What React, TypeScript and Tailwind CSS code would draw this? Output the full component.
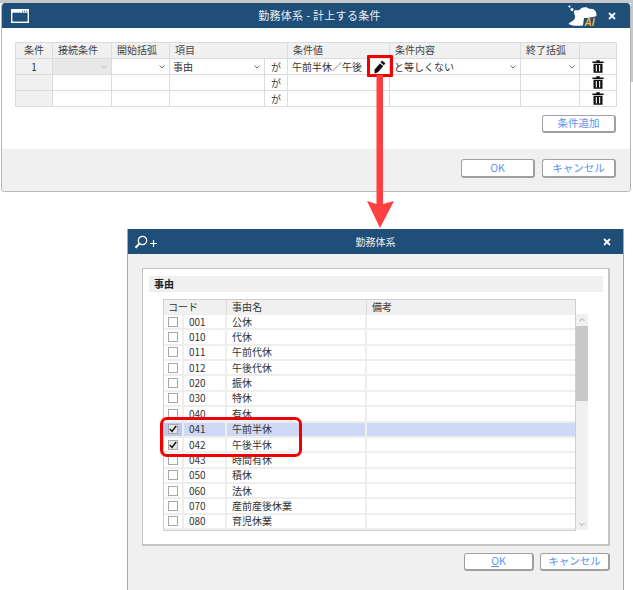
const font = { fontFamily: '"Noto Sans CJK JP", "Noto Sans", sans-serif' };

const topCols = "grid-cols-[37px_59px_58px_95px_23px_80px_22px_131px_59px_37px]";
const topHeaders = ["条件", "接続条件", "開始括弧", "項目", "", "条件値", "", "条件内容", "終了括弧", ""];

const reasons = [
  ["001", "公休"],
  ["010", "代休"],
  ["011", "午前代休"],
  ["012", "午後代休"],
  ["020", "振休"],
  ["030", "特休"],
  ["040", "有休"],
  ["041", "午前半休"],
  ["042", "午後半休"],
  ["043", "時間有休"],
  ["050", "積休"],
  ["060", "法休"],
  ["070", "産前産後休業"],
  ["080", "育児休業"],
];

function Chevron({ light }: { light?: boolean }) {
  return (
    <svg width="6" height="4" viewBox="0 0 6 4" className="absolute right-[4px] top-[6px]">
      <path d="M0.5 0.5 L3 3 L5.5 0.5" fill="none" stroke={light ? "#c0c0c0" : "#777"} strokeWidth="1" />
    </svg>
  );
}

function Trash() {
  return (
    <svg width="12" height="13" viewBox="0 0 12 13">
      <path d="M4.2 1.4V0.2h3.6v1.2h3.8v1.5H0.4V1.4z" fill="#111" />
      <path d="M1.5 3.8h9v9h-9zM3.8 5v6.6h1.1V5zM7.1 5v6.6h1.1V5z" fill="#111" fillRule="evenodd" />
    </svg>
  );
}

function Pencil() {
  return (
    <svg width="13" height="14" viewBox="0 0 13 14" className="translate-x-[1px]">
      <path d="M9 0.6 L12.4 3.2 L10.9 5.2 L7.5 2.6z" fill="#111" />
      <path d="M6.9 3.4 L10.3 6 L5 12.2 L1.6 13.4 L1.4 9.8z" fill="#111" />
    </svg>
  );
}

function Cloud() {
  return (
    <svg width="30" height="21" viewBox="0 0 30 21" className="shrink-0">
      <circle cx="1.5" cy="1.5" r="1.1" fill="#fff" />
      <circle cx="4" cy="4.5" r="1.5" fill="#fff" />
      <path d="M6 6 C8 4.5 10 6 12 4.5 C14 1.5 19 1.5 21.5 4 C25.5 3 29 6 28.5 11 C26 12 22 12.5 19.5 13 L16 13 L15 20.5 C10 21 4 21 0.5 19 C3 16 6.5 16 7 12.5 C7.5 10 5.5 9 6 6z" fill="#fff" />
      <text x="16.5" y="20.5" fontSize="10" fontWeight="700" fontStyle="italic" fill="#f2b632" fontFamily="Liberation Sans, sans-serif">AI</text>
    </svg>
  );
}

function CloseX() {
  return (
    <svg width="8" height="8" viewBox="0 0 8 8" className="shrink-0">
      <path d="M1 1 L7 7 M7 1 L1 7" stroke="#fff" strokeWidth="1.8" />
    </svg>
  );
}

function ZoomPlus() {
  return (
    <svg width="24" height="14" viewBox="0 0 24 14" className="shrink-0">
      <circle cx="8.5" cy="5.5" r="4.2" fill="none" stroke="#fff" strokeWidth="1.2" />
      <path d="M5.2 8.8 L1.5 12.8" stroke="#fff" strokeWidth="2" />
      <path d="M16 8.5 H23 M19.5 5 V12" stroke="#fff" strokeWidth="1.2" />
    </svg>
  );
}

function Btn({ children, className = "" }: { children: React.ReactNode; className?: string }) {
  return (
    <button className={`flex items-center justify-center rounded-[3px] border border-[#a0a0a0] border-b-2 border-r-2 bg-white text-[10.5px] leading-none text-[#5b94ee] ${className}`}>
      {children}
    </button>
  );
}

function TopRow({ index, first }: { index: string; first?: boolean }) {
  const cell = "relative h-[16px] border-r border-b border-[#dcdcdc] text-[10px] leading-[15px] text-[#333]";
  return (
    <div className={`grid ${topCols}`}>
      <div className={`${cell} bg-[#f0f0f0] text-center`}>{index}</div>
      <div className={`${cell} ${first ? "bg-[#e8e8e8]" : ""}`}>{first && <Chevron light />}</div>
      <div className={cell}>{first && <Chevron />}</div>
      <div className={`${cell} pl-[3px]`}>
        {first && "事由"}
        {first && <Chevron />}
      </div>
      <div className={`${cell} text-center text-[#444]`}>が</div>
      <div className={`${cell} overflow-hidden whitespace-nowrap pl-[4px] border-r-0`}>{first && "午前半休／午後"}</div>
      <div className={`${cell} flex items-center justify-center`}>{first && <Pencil />}</div>
      <div className={`${cell} pl-[4px]`}>
        {first && "と等しくない"}
        {first && <Chevron />}
      </div>
      <div className={cell}>{first && <Chevron />}</div>
      <div className={`${cell} flex items-center justify-center`}>
        <Trash />
      </div>
    </div>
  );
}

function ReasonRow({ code, name, on, active }: { code: string; name: string; on: boolean; active: boolean }) {
  const cell = "flex items-center border-r-2 border-[#eeeeee]";
  return (
    <div className={`grid min-h-0 flex-1 grid-cols-[20px_43px_140px_1fr] border-b-2 border-[#eeeeee] text-[10px] leading-none text-[#333] ${active ? "bg-[#cfd9f5]" : ""}`}>
      <div className={`${cell} justify-center ${active ? "bg-[#b9c9f0]" : ""}`}>
        <span className={`flex h-[10px] w-[10px] items-center justify-center border border-[#a8a8a8] ${on ? "bg-[#e6e6e6]" : "bg-white"}`}>
          {on && (
            <svg width="8" height="8" viewBox="0 0 8 8">
              <path d="M0.8 4 L3 6.4 L7.2 1" fill="none" stroke="#111" strokeWidth="1.4" />
            </svg>
          )}
        </span>
      </div>
      <div className={`${cell} pl-[5px]`}>{code}</div>
      <div className={`${cell} pl-[5px]`}>{name}</div>
      <div />
    </div>
  );
}

export default function App() {
  return (
    <div style={font} className="relative h-[590px] w-[633px] overflow-hidden bg-white">
      {/* edge of the window behind the dialog */}
      <div className="h-[3px] bg-[#c8c8c8]" />
      <div className="absolute right-0 top-0 h-[82px] w-[2px] bg-[#c8c8c8]" />

      {/* condition dialog */}
      <div className="ml-[1px] w-[630px]">
        <div className="overflow-hidden rounded-[4px] border border-t-0 border-[#b8b8b8]">
          <div className="flex h-[25px] items-center bg-[#1f4e79] pl-[9px] pr-[14px]">
            <svg width="18" height="14" viewBox="0 0 18 14" className="shrink-0">
              <rect x="0.7" y="0.7" width="16.6" height="12.6" fill="none" stroke="#fff" strokeWidth="1.4" />
              <rect x="0.7" y="0.7" width="16.6" height="3" fill="#fff" />
              <path d="M11 2.2h1M13 2.2h1M15 2.2h1" stroke="#1f4e79" strokeWidth="1" />
            </svg>
            <div className="flex-1 pl-[42px] text-center text-[11px] tracking-[0.3px] text-[#e8eef4]">勤務体系 - 計上する条件</div>
            <div className="flex items-center gap-[10px]">
              <Cloud />
              <CloseX />
            </div>
          </div>
          <div className="h-[121px] bg-white pl-[13px] pt-[14px]">
            <div className="w-[601px] border-t border-l border-[#dcdcdc]">
              <div className={`grid ${topCols} bg-[#f0f0f0] text-[10px] leading-[13px] text-[#444]`}>
                {topHeaders.map((h, i) => (
                  <div
                    key={i}
                    className={`h-[16px] border-b border-[#dcdcdc] ${i === 3 || i === 5 ? "border-r-0" : "border-r"} ${i === 0 ? "text-center" : "pl-[5px]"}`}
                  >
                    {h}
                  </div>
                ))}
              </div>
              <TopRow index="1" first />
              <TopRow index="" />
              <TopRow index="" />
            </div>
            <div className="flex w-[601px] justify-end pt-[8px]">
              <Btn className="h-[18px] w-[74px]">条件追加</Btn>
            </div>
          </div>
          <div className="flex h-[42px] justify-end gap-[7px] bg-[#f0f0f0] pr-[14px] pt-[10px]">
            <Btn className="h-[19px] w-[74px]">OK</Btn>
            <Btn className="h-[19px] w-[74px]">キャンセル</Btn>
          </div>
        </div>
      </div>

      {/* reason picker dialog */}
      <div className="ml-[127px] mt-[37px] w-[497px] border-l border-r border-[#a8a8a8]">
        <div className="flex h-[25px] items-center bg-[#1f4e79] pl-[6px] pr-[12px]">
          <ZoomPlus />
          <div className="flex-1 pr-[10px] text-center text-[10px] text-[#e8eef4]">勤務体系</div>
          <CloseX />
        </div>
        <div className="h-[337px] bg-[#f0f0f0] pl-[14px] pr-[13px] pt-[14px]">
          <div className="h-[278px] border border-b-2 border-r-2 border-[#c4c4c4] bg-white pl-[6px] pr-[5px] pt-[7px]">
            <div className="h-[16px] bg-[#f0f0f0] pl-[5px] text-[10px] font-bold leading-[15px] text-[#222]">事由</div>
            <div className="flex pl-[14px] pt-[7px]">
              <div className="flex h-[232px] w-[413px] flex-col border border-[#cfcfcf]">
                <div className="grid h-[15px] shrink-0 grid-cols-[63px_140px_1fr] bg-[#f0f0f0] text-[10px] leading-[14px] text-[#333]">
                  <div className="border-r border-[#dcdcdc] pl-[4px]">コード</div>
                  <div className="border-r border-[#dcdcdc] pl-[5px]">事由名</div>
                  <div className="pl-[5px]">備考</div>
                </div>
                {reasons.map(([code, name]) => (
                  <ReasonRow key={code} code={code} name={name} on={code === "041" || code === "042"} active={code === "041"} />
                ))}
              </div>
              <div className="mt-[15px] flex h-[216px] w-[12px] flex-col bg-[#f0f0f0]">
                <svg width="12" height="12" viewBox="0 0 12 12" className="shrink-0">
                  <path d="M3.5 7 L6 4.5 L8.5 7" fill="none" stroke="#aaa" strokeWidth="1" />
                </svg>
                <div className="h-[75px] shrink-0 bg-[#c8c8c8]" />
                <div className="flex-1" />
                <svg width="12" height="12" viewBox="0 0 12 12" className="shrink-0">
                  <path d="M3.5 5 L6 7.5 L8.5 5" fill="none" stroke="#aaa" strokeWidth="1" />
                </svg>
              </div>
            </div>
          </div>
          <div className="flex justify-end gap-[6px] pt-[7px]">
            <Btn className="h-[18px] w-[70px]">
              <span className="underline">O</span>K
            </Btn>
            <Btn className="h-[18px] w-[70px]">キャンセル</Btn>
          </div>
        </div>
      </div>

      {/* callouts drawn over the dialogs */}
      <div className="absolute left-[367px] top-[55px] h-[22px] w-[26px] rounded-[1px] border-[3px] border-[#f00000]" />
      <svg width="30" height="155" viewBox="0 0 30 155" className="absolute left-[366px] top-[75px]">
        <path d="M10.5 0 H17 V129 L28 126 L14 153 L1 126 L10.5 129z" fill="#ff4040" />
      </svg>
      <div className="absolute left-[160px] top-[417px] h-[40px] w-[142px] rounded-[7px] border-[3px] border-[#f00000]" />
    </div>
  );
}
